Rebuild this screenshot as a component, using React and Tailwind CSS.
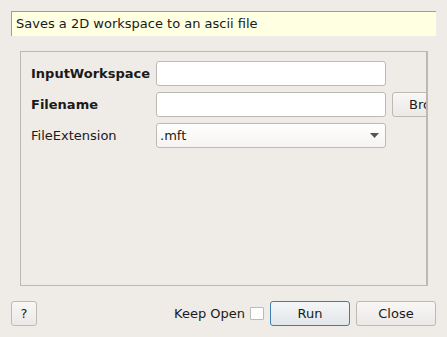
export default function App() {
  const font = { fontFamily: '"DejaVu Sans", sans-serif' };
  return (
    <div className="w-[447px] h-[337px] bg-[#efebe7] flex flex-col text-[13px] text-[#1a1a1a] overflow-hidden" style={font}>
      <div className="mt-[11px] ml-[11px] w-[425px] h-[25px] bg-[#ffffe1] border-l border-t border-[#a09e9a] flex items-center pl-[4px] text-[13px]">
        Saves a 2D workspace to an ascii file
      </div>
      <div className="mt-[15px] ml-[20px] w-[408px] h-[235px] border border-[#bcb8b2] relative overflow-hidden">
        <div className="flex flex-col pt-[9px] pl-[10px] gap-[6px]">
          <div className="flex items-center h-[25px]">
            <div className="w-[125px] shrink-0 font-bold">InputWorkspace</div>
            <div className="w-[230px] h-[25px] shrink-0 bg-white border border-[#bdb9b3] rounded-[3px]" />
          </div>
          <div className="flex items-center h-[25px]">
            <div className="w-[125px] shrink-0 font-bold">Filename</div>
            <div className="w-[230px] h-[25px] bg-white border border-[#bdb9b3] rounded-[3px] shrink-0" />
            <div className="ml-[6px] w-[80px] h-[25px] shrink-0 border border-[#bdb9b3] rounded-[3px] bg-gradient-to-b from-[#f8f7f6] to-[#ebe9e6] flex items-center pl-[16px]">Browse</div>
          </div>
          <div className="flex items-center h-[25px]">
            <div className="w-[125px] shrink-0">FileExtension</div>
            <div className="w-[230px] h-[25px] shrink-0 border border-[#bdb9b3] rounded-[3px] bg-gradient-to-b from-[#ffffff] to-[#f4f3f1] flex items-center pl-[3px] justify-between pr-[6px]">
              <span>.mft</span>
              <svg width="9" height="5" viewBox="0 0 9 5"><path d="M0 0 H9 L4.5 5 Z" fill="#555" /></svg>
            </div>
          </div>
        </div>
        <div className="absolute right-0 top-0 bottom-0 w-px bg-[#bcb8b2]" />
      </div>
      <div className="mt-[15px] flex items-center h-[25px] pl-[11px] pr-[11px]">
        <div className="w-[26px] h-[25px] border border-[#bdb9b3] rounded-[3px] bg-gradient-to-b from-[#f8f7f6] to-[#ebe9e6] flex items-center justify-center">?</div>
        <div className="flex-1" />
        <span>Keep Open</span>
        <div className="ml-[5px] w-[14px] h-[13px] bg-white border border-[#bdb9b3] rounded-[1px]" />
        <div className="ml-[6px] w-[80px] h-[25px] border border-[#3e7eb4] rounded-[3px] bg-gradient-to-b from-[#f5f6f7] to-[#e2e6ea] flex items-center justify-center">Run</div>
        <div className="ml-[6px] w-[80px] h-[25px] border border-[#bdb9b3] rounded-[3px] bg-gradient-to-b from-[#f8f7f6] to-[#ebe9e6] flex items-center justify-center">Close</div>
      </div>
    </div>
  );
}
